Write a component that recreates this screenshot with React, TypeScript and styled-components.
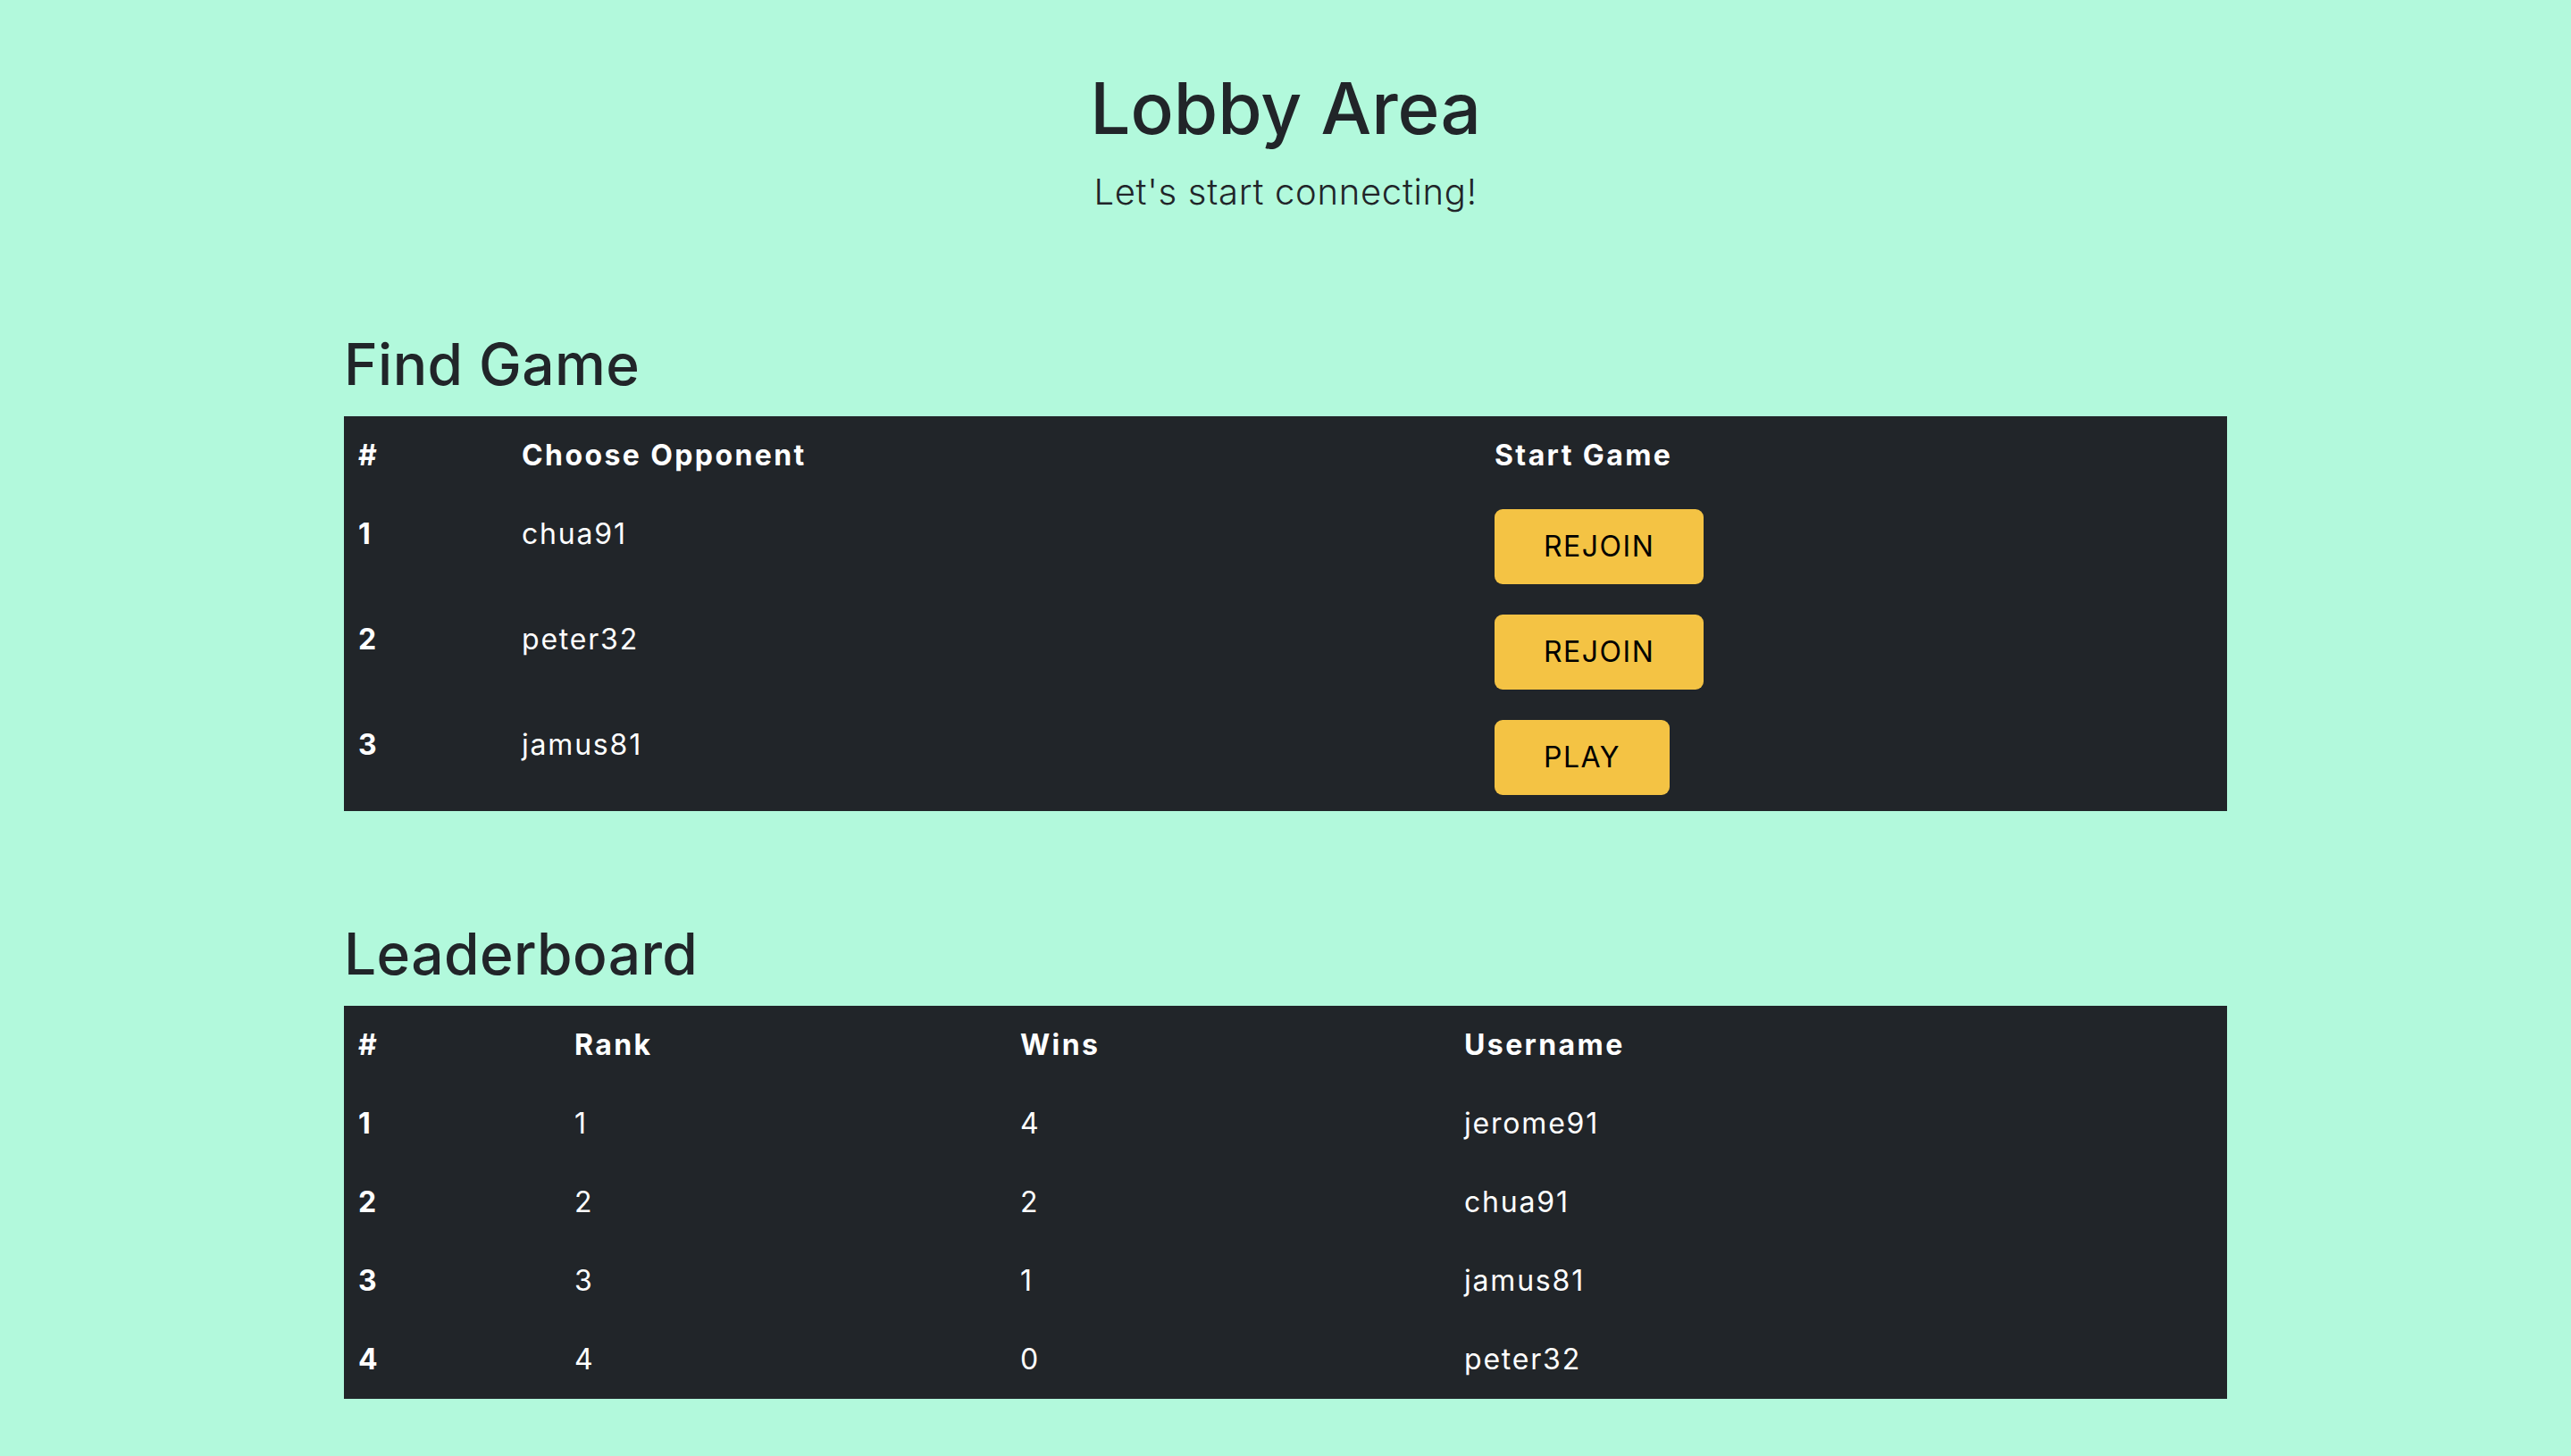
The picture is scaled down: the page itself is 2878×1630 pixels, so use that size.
import React from "react";
import styled, { createGlobalStyle } from "styled-components";

const GlobalStyle = createGlobalStyle`
  html, body {
    margin: 0;
    padding: 0;
    background: #b2f9dc;
  }
  body {
    font-family: Inter, "Noto Sans", "Liberation Sans", sans-serif;
    color: #212529;
    font-size: 32px;
    line-height: 1.5;
  }
  * { box-sizing: border-box; }
`;

const Page = styled.main`
  width: 2108px;
  margin: 0 auto;
  padding: 73px 0 64px;
  display: flex;
  flex-direction: column;
`;

const Hero = styled.header`
  display: flex;
  flex-direction: column;
  align-items: center;
  gap: 16px;
  margin-bottom: 125px;
`;

const Title = styled.h1`
  margin: 0;
  font-size: 80px;
  font-weight: 500;
  line-height: 1.2;
`;

const Lead = styled.p`
  margin: 0;
  font-size: 40px;
  font-weight: 300;
  line-height: 1.5;
  letter-spacing: 0.7px;
`;

const Section = styled.section<{ $gapAfter?: number }>`
  display: flex;
  flex-direction: column;
  gap: 19px;
  margin-bottom: ${(p) => p.$gapAfter ?? 0}px;
`;

const SectionTitle = styled.h2`
  margin: 0;
  font-size: 64px;
  font-weight: 500;
  line-height: 1.2;
  letter-spacing: 0.4px;
`;

const Table = styled.table`
  width: 100%;
  border-collapse: collapse;
  table-layout: fixed;
  background: #212529;
  color: #ffffff;
  font-size: 32px;
  line-height: 1.5;
`;

const Col = styled.col<{ $w: number }>`
  width: ${(p) => p.$w}px;
`;

const HeadCell = styled.th`
  padding: 20px 16px;
  text-align: left;
  font-weight: 700;
  letter-spacing: 2.4px;
  vertical-align: top;
`;

const RowHead = styled.th`
  padding: 20px 16px;
  text-align: left;
  font-weight: 700;
  letter-spacing: 2.4px;
  vertical-align: top;
`;

const Cell = styled.td`
  padding: 20px 16px;
  font-weight: 400;
  letter-spacing: 1.8px;
  vertical-align: top;
`;

const ActionCell = styled.td`
  padding: 16px 16px 18px;
  vertical-align: top;
`;

const ActionButton = styled.button`
  display: inline-flex;
  align-items: center;
  justify-content: center;
  height: 84px;
  padding: 0 55px;
  border: none;
  border-radius: 9px;
  background: #f4c344;
  color: #000000;
  font-family: Inter, "Noto Sans", "Liberation Sans", sans-serif;
  font-size: 32px;
  font-weight: 400;
  line-height: 1.5;
  letter-spacing: 1.5px;
  cursor: pointer;
`;

const games = [
  { id: 1, name: "chua91", action: "REJOIN" },
  { id: 2, name: "peter32", action: "REJOIN" },
  { id: 3, name: "jamus81", action: "PLAY" },
];

const leaders = [
  { id: 1, rank: 1, wins: 4, user: "jerome91" },
  { id: 2, rank: 2, wins: 2, user: "chua91" },
  { id: 3, rank: 3, wins: 1, user: "jamus81" },
  { id: 4, rank: 4, wins: 0, user: "peter32" },
];

export default function App() {
  return (
    <>
      <GlobalStyle />
      <Page>
        <Hero>
          <Title>Lobby Area</Title>
          <Lead>Let's start connecting!</Lead>
        </Hero>

        <Section $gapAfter={122}>
          <SectionTitle>Find Game</SectionTitle>
          <Table>
            <colgroup>
              <Col $w={183} />
              <Col $w={1089} />
              <Col $w={836} />
            </colgroup>
            <thead>
              <tr>
                <HeadCell>#</HeadCell>
                <HeadCell>Choose Opponent</HeadCell>
                <HeadCell>Start Game</HeadCell>
              </tr>
            </thead>
            <tbody>
              {games.map((g) => (
                <tr key={g.id}>
                  <RowHead>{g.id}</RowHead>
                  <Cell>{g.name}</Cell>
                  <ActionCell>
                    <ActionButton>{g.action}</ActionButton>
                  </ActionCell>
                </tr>
              ))}
            </tbody>
          </Table>
        </Section>

        <Section>
          <SectionTitle>Leaderboard</SectionTitle>
          <Table>
            <colgroup>
              <Col $w={242} />
              <Col $w={499} />
              <Col $w={497} />
              <Col $w={870} />
            </colgroup>
            <thead>
              <tr>
                <HeadCell>#</HeadCell>
                <HeadCell>Rank</HeadCell>
                <HeadCell>Wins</HeadCell>
                <HeadCell>Username</HeadCell>
              </tr>
            </thead>
            <tbody>
              {leaders.map((l) => (
                <tr key={l.id}>
                  <RowHead>{l.id}</RowHead>
                  <Cell>{l.rank}</Cell>
                  <Cell>{l.wins}</Cell>
                  <Cell>{l.user}</Cell>
                </tr>
              ))}
            </tbody>
          </Table>
        </Section>
      </Page>
    </>
  );
}
